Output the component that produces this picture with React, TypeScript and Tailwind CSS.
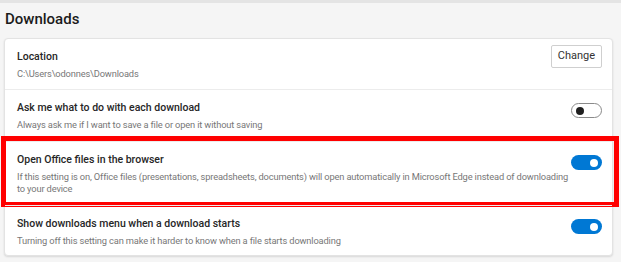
import React from 'react';

type Row = {
  title: string;
  desc: string;
  control: 'button' | 'on' | 'off';
  height: string;
  highlight?: boolean;
};

const rows: Row[] = [
  { title: 'Location', desc: 'C:\\Users\\odonnes\\Downloads', control: 'button', height: 'h-[50px]' },
  {
    title: 'Ask me what to do with each download',
    desc: 'Always ask me if I want to save a file or open it without saving',
    control: 'off',
    height: 'h-[52px]',
  },
  {
    title: 'Open Office files in the browser',
    desc: 'If this setting is on, Office files (presentations, spreadsheets, documents) will open automatically in Microsoft Edge instead of downloading to your device',
    control: 'on',
    height: 'h-[64px]',
    highlight: true,
  },
  {
    title: 'Show downloads menu when a download starts',
    desc: 'Turning off this setting can make it harder to know when a file starts downloading',
    control: 'on',
    height: 'h-[50px]',
  },
];

function Toggle({ on }: { on: boolean }) {
  if (on) {
    return (
      <div className="mt-[2px] flex h-[15px] w-[31px] shrink-0 items-center justify-end rounded-full bg-[#0078d4] pr-[4px]">
        <div className="h-[8px] w-[8px] rounded-full bg-white" />
      </div>
    );
  }
  return (
    <div className="mt-[2px] flex h-[15px] w-[31px] shrink-0 items-center rounded-full border border-[#8a8a8a] bg-white pl-[4px]">
      <div className="h-[8px] w-[8px] rounded-full bg-[#1f1f1f]" />
    </div>
  );
}

export default function App() {
  return (
    <div
      className="h-[262px] w-[621px] overflow-hidden bg-[#f5f5f5]"
      style={{ fontFamily: 'Roboto, "Noto Sans", sans-serif' }}
    >
      <div className="h-[3px] bg-[#e4e4e4]" />
      <h1 className="pl-[5px] pt-[5px] text-[15px] font-medium leading-[22px] text-[#1b1b1b]">Downloads</h1>

      <div className="ml-[4px] mt-[8px] w-[609px] rounded-[4px] border border-[#e3e3e3] bg-white shadow-[0_1px_2px_rgba(0,0,0,0.12)]">
        {rows.map((row, i) => (
          <div
            key={row.title}
            className={`relative flex items-start pl-[12px] pr-[10px] pt-[11px] ${row.height} ${
              i > 0 ? 'border-t border-[#ececec]' : ''
            }`}
          >
            <div className="min-w-0 flex-1 pr-[2px]">
              <div className="text-[10.5px] font-medium leading-[14px] text-[#262626]">{row.title}</div>
              <div className="mt-[4px] text-[9.3px] leading-[12px] tracking-[-0.15px] text-[#777777]">{row.desc}</div>
            </div>

            {row.control === 'button' ? (
              <button className="-mt-[5px] h-[23px] w-[51px] shrink-0 rounded-[2px] border border-[#cfcfcf] bg-white text-[11px] text-[#333]">
                Change
              </button>
            ) : (
              <Toggle on={row.control === 'on'} />
            )}

            {/* annotation box drawn over the row */}
            {row.highlight && (
              <div className="pointer-events-none absolute -bottom-[2px] -left-[4px] -right-[7px] -top-[6px] border-[5px] border-[#ff0000]" />
            )}
          </div>
        ))}
      </div>
    </div>
  );
}
